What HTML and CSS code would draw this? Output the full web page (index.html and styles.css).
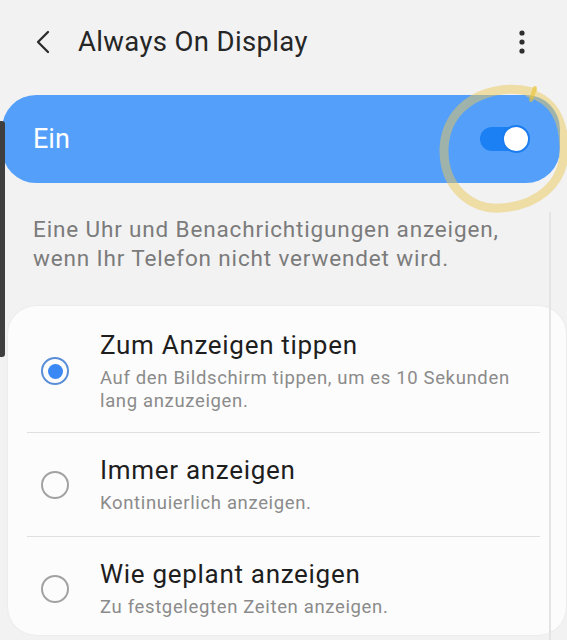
FILE: index.html
```html
<!DOCTYPE html>
<html lang="de">
<head>
<meta charset="utf-8">
<title>Always On Display</title>
<link rel="stylesheet" href="styles.css">
</head>
<body>
<div class="screen">
  <header class="appbar">
    <svg class="back" width="14" height="24" viewBox="0 0 14 24"><polyline points="12,2 2,12 12,22" fill="none" stroke="#2b2b2b" stroke-width="2.3" stroke-linecap="round" stroke-linejoin="round"/></svg>
    <h1 class="title">Always On Display</h1>
    <svg class="more" width="6" height="24" viewBox="0 0 6 24"><circle cx="3" cy="3" r="2.6" fill="#2e2e2e"/><circle cx="3" cy="12" r="2.6" fill="#2e2e2e"/><circle cx="3" cy="21" r="2.6" fill="#2e2e2e"/></svg>
  </header>

  <div class="master">
    <span class="master-label">Ein</span>
    <span class="switch"><span class="track"></span><span class="thumb"></span></span>
  </div>

  <p class="desc">Eine Uhr und Benachrichtigungen anzeigen, wenn Ihr Telefon nicht verwendet wird.</p>

  <div class="card">
    <div class="row first">
      <span class="radio checked"><span class="dot"></span></span>
      <div class="texts">
        <div class="row-title">Zum Anzeigen tippen</div>
        <div class="row-sub">Auf den Bildschirm tippen, um es 10 Sekunden lang anzuzeigen.</div>
      </div>
    </div>
    <div class="divider"></div>
    <div class="row">
      <span class="radio"></span>
      <div class="texts">
        <div class="row-title">Immer anzeigen</div>
        <div class="row-sub">Kontinuierlich anzeigen.</div>
      </div>
    </div>
    <div class="divider"></div>
    <div class="row last">
      <span class="radio"></span>
      <div class="texts">
        <div class="row-title">Wie geplant anzeigen</div>
        <div class="row-sub">Zu festgelegten Zeiten anzeigen.</div>
      </div>
    </div>
  </div>

  <div class="edge"></div>
  <div class="scrollline"></div>
  <svg class="scribble" width="567" height="640" viewBox="0 0 567 640">
    <path d="M533 92 C490 81 446 104 444 148 C443 190 474 210 500 208 C536 206 564 185 564 150 C564 118 553 100 529 93" fill="none" stroke="rgba(235,200,90,0.5)" stroke-width="9" stroke-linecap="round"/>
    <path d="M535 88 L531 100" fill="none" stroke="rgba(232,196,50,0.65)" stroke-width="4" stroke-linecap="round"/>
  </svg>
</div>
</body>
</html>
```

FILE: styles.css
```css
* { box-sizing: border-box; }
html, body { margin: 0; padding: 0; }
body {
  background: #f2f2f2;
  font-family: Roboto, "Noto Sans", "Liberation Sans", sans-serif;
  width: 567px;
  height: 640px;
  overflow: hidden;
}
.screen {
  position: relative;
  width: 567px;
  height: 640px;
  padding-top: 26px;
}

.appbar {
  display: flex;
  align-items: center;
  height: 32px;
  padding-left: 36px;
  padding-right: 42px;
}
.back { flex: none; }
.title {
  margin: 0 0 0 28px;
  font-size: 27.5px;
  font-weight: 400;
  line-height: 32px;
  color: #262626;
  letter-spacing: 0.35px;
}
.more { margin-left: auto; flex: none; }

.master {
  margin: 37px 7px 0 2px;
  height: 88px;
  border-radius: 34px;
  background: #549ffa;
  display: flex;
  align-items: center;
  padding: 0 30px 0 31px;
}
.master-label {
  color: #ffffff;
  font-size: 27px;
  line-height: 32px;
}
.switch {
  position: relative;
  margin-left: auto;
  width: 50px;
  height: 28px;
}
.track {
  position: absolute;
  left: 0;
  top: 2px;
  width: 44px;
  height: 24px;
  border-radius: 12px;
  background: #1a80f3;
}
.thumb {
  position: absolute;
  right: 0;
  top: 0;
  width: 28px;
  height: 28px;
  border-radius: 50%;
  background: #ffffff;
  border: 2px solid #1b7cef;
}

.desc {
  margin: 32px 30px 0 33px;
  font-size: 22.5px;
  line-height: 29px;
  letter-spacing: 0.85px;
  color: #7b7b7b;
}

.card {
  margin: 33px 1px 0 8px;
  background: #fcfcfc;
  border-radius: 28px;
  box-shadow: 0 0 2px rgba(0,0,0,0.08);
}
.row {
  display: flex;
  align-items: center;
  padding: 21px 30px 21px 33px;
}
.row.first { padding-top: 23px; padding-bottom: 19px; }
.row.last { padding-bottom: 16px; }
.radio {
  flex: none;
  width: 28px;
  height: 28px;
  border-radius: 50%;
  border: 2px solid #a2a2a2;
  display: flex;
  align-items: center;
  justify-content: center;
}
.radio.checked { border-color: #5a8fd8; }
.dot {
  width: 15px;
  height: 15px;
  border-radius: 50%;
  background: #3a88f3;
}
.texts { margin-left: 31px; }
.row-title {
  font-size: 26px;
  line-height: 32px;
  letter-spacing: 0.7px;
  color: #1e1e1e;
}
.row-sub {
  margin-top: 6px;
  font-size: 18.5px;
  line-height: 23px;
  letter-spacing: 0.65px;
  color: #8b8b8b;
}
.divider {
  height: 1px;
  background: #e0e0e0;
  margin: 0 26px 0 19px;
}

.edge {
  position: absolute;
  left: 0;
  top: 121px;
  width: 5px;
  height: 236px;
  background: #3f3f3f;
  border-radius: 0 3px 3px 0;
}
.scrollline {
  position: absolute;
  left: 549px;
  top: 212px;
  width: 2px;
  height: 428px;
  background: #e4e4e4;
}
.scribble {
  position: absolute;
  left: 0;
  top: 0;
  pointer-events: none;
}
```
